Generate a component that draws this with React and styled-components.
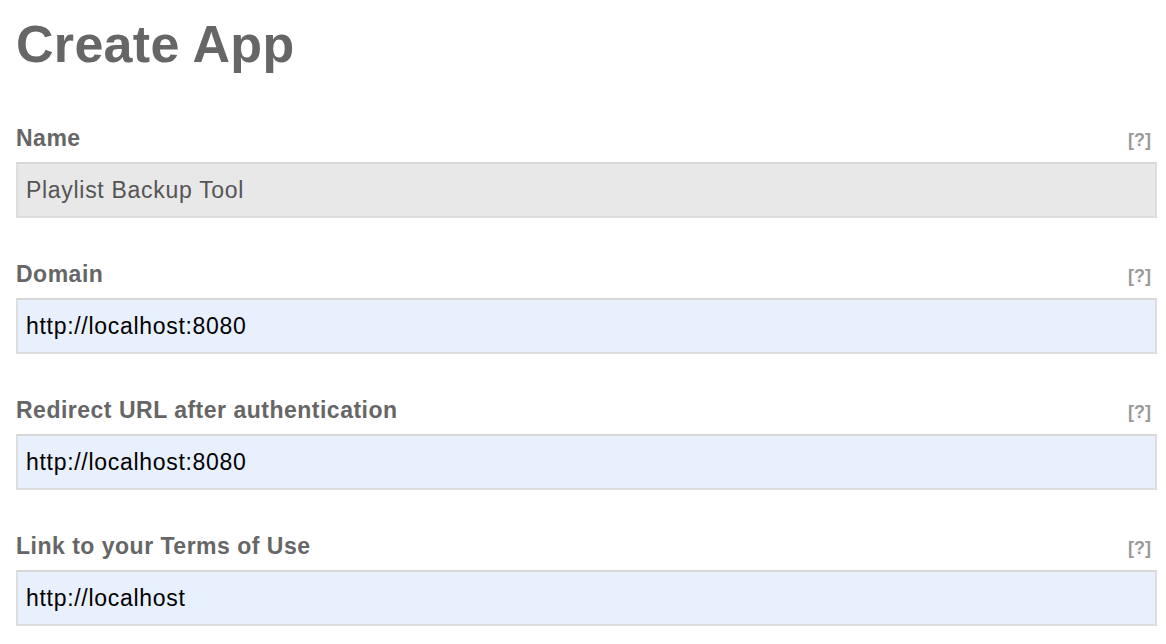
import React from "react";
import styled, { createGlobalStyle } from "styled-components";

const fields = [
  { label: "Name", value: "Playlist Backup Tool", disabled: true },
  { label: "Domain", value: "http://localhost:8080" },
  { label: "Redirect URL after authentication", value: "http://localhost:8080" },
  { label: "Link to your Terms of Use", value: "http://localhost" },
];

function App() {
  return (
    <>
      <GlobalStyle />
      <Page>
        <Title>Create App</Title>
        {fields.map((f) => (
          <Field key={f.label}>
            <LabelRow>
              <Label>{f.label}</Label>
              <Help href="#">[?]</Help>
            </LabelRow>
            <Input defaultValue={f.value} readOnly $disabled={f.disabled} />
          </Field>
        ))}
      </Page>
    </>
  );
}

export default App;

const GlobalStyle = createGlobalStyle`
  body {
    margin: 0;
    background: #fff;
    font-family: "Liberation Sans", Arial, Helvetica, sans-serif;
  }
`;

const Page = styled.div`
  padding: 0 9px 0 16px;
`;

const Title = styled.h1`
  margin: 14px 0 50px;
  font-size: 52px;
  line-height: 60px;
  font-weight: bold;
  letter-spacing: 0.3px;
  color: #666;
`;

const Field = styled.div`
  display: flex;
  flex-direction: column;
  margin-bottom: 42px;
`;

const LabelRow = styled.div`
  display: flex;
  justify-content: space-between;
  align-items: flex-start;
  height: 24px;
  margin-bottom: 14px;
`;

const Label = styled.label`
  padding-top: 2px;
  font-size: 23px;
  line-height: 24px;
  font-weight: bold;
  letter-spacing: 0.5px;
  color: #666;
`;

const Help = styled.a`
  margin-right: 6px;
  padding-top: 6px;
  font-size: 18px;
  line-height: 21px;
  font-weight: bold;
  color: #999;
  text-decoration: none;
`;

const Input = styled.input`
  box-sizing: border-box;
  width: 100%;
  height: 56px;
  margin: 0;
  padding: 0 8px;
  border: 2px solid #dddddd;
  border-top-color: #d6d6d6;
  outline: none;
  font-family: "Liberation Sans", Arial, Helvetica, sans-serif;
  font-size: 23px;
  letter-spacing: 0.7px;
  color: ${(p) => (p.$disabled ? "#555" : "#000")};
  background: ${(p) => (p.$disabled ? "#e8e8e8" : "#e8f0fe")};
`;
